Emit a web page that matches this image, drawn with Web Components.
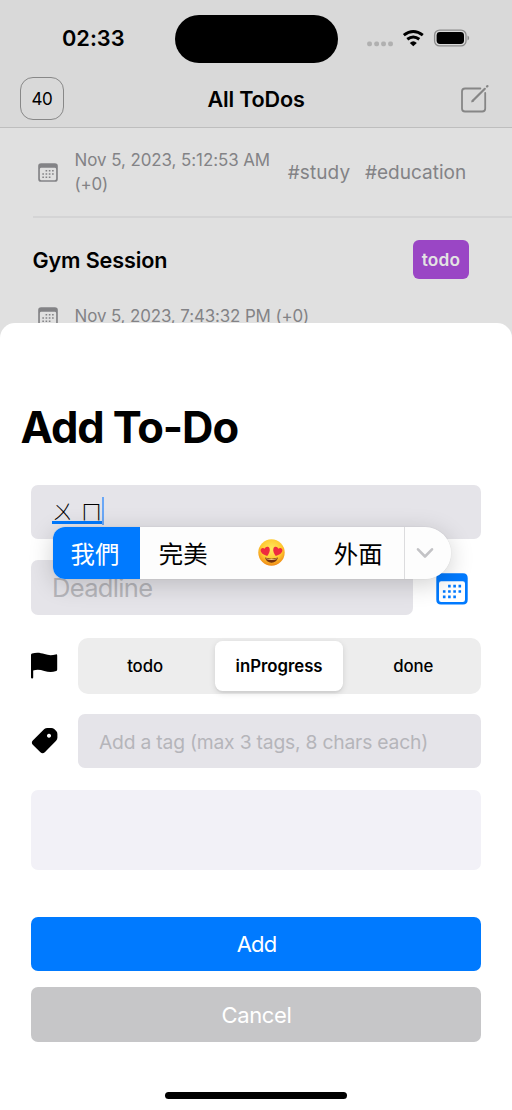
<!DOCTYPE html>
<html lang="en">
<head>
<meta charset="utf-8">
<title>Add To-Do</title>
<style>
html,body{margin:0;padding:0;background:#fff}
body{width:512px;height:1110px;overflow:hidden;font-family:Inter,"Noto Sans CJK TC",sans-serif;color:#000}
</style>
</head>
<body>
<todo-app></todo-app>
<script>
function define(name, html, setup) {
  const template = document.createElement('template');
  template.innerHTML = html.trim();
  customElements.define(name, class extends HTMLElement {
    constructor() {
      super();
      this.attachShadow({ mode: 'open' }).appendChild(template.content.cloneNode(true));
    }
    connectedCallback() { if (setup) setup.call(this, this.shadowRoot); }
  });
}

/* One line of text, tracked so that it fills the width given in "w". */
define('ui-text', `
<style>:host{display:block;flex:none;white-space:nowrap}span{display:inline-block;vertical-align:top}</style><span><slot></slot></span>`,
function (root) {
  const w = parseFloat(this.getAttribute('w'));
  if (!w) return;
  const span = root.querySelector('span');
  this.style.width = w + 'px';
  span.style.letterSpacing = '0';
  const natural = span.getBoundingClientRect().width;
  span.style.letterSpacing = ((w - natural) / this.textContent.length).toFixed(3) + 'px';
});

define('calendar-icon', `
<style>:host{display:block;flex:none;width:32px;height:32px}svg{display:block;width:100%;height:100%}</style>
<svg viewBox="0 0 32 32" preserveAspectRatio="none" fill="currentColor">
<path fill-rule="evenodd" d="M5 0.3H27Q31.7 0.3 31.7 5V26.8Q31.7 31.6 27 31.6H5Q0.3 31.6 0.3 26.8V5Q0.3 0.3 5 0.3ZM5.2 8.2Q3 8.2 3 10.4V26.7Q3 29 5.2 29H26.8Q29 29 29 26.7V10.4Q29 8.2 26.8 8.2Z"/>
<path d="M12.1 11.8h2.6v2.6h-2.6zM17.3 11.8h2.6v2.6h-2.6zM22.5 11.8h2.6v2.6h-2.6zM6.9 17.2h2.6v2.6H6.9zM12.1 17.2h2.6v2.6h-2.6zM17.3 17.2h2.6v2.6h-2.6zM22.5 17.2h2.6v2.6h-2.6zM6.9 22.6h2.6v2.6H6.9zM12.1 22.6h2.6v2.6h-2.6zM17.3 22.6h2.6v2.6h-2.6z"/>
</svg>`);

define('status-bar', `
<style>
:host{display:flex;height:76px;box-sizing:border-box;align-items:flex-start;background:#d9d9d9}
ui-text{margin:25px 0 0 62px;font-size:21.8px;line-height:26px;font-weight:600}
.island{width:163px;height:48px;margin:14.5px 0 0 50px;border-radius:24px;background:#000}
svg{display:block;margin:28px 0 0 28px}
</style>
<ui-text w="62.5">02:33</ui-text>
<div class="island"></div>
<svg width="104" height="20" viewBox="366 28 104 20">
<g fill="#b0b0b0"><rect x="367.2" y="41.5" width="4.7" height="4.7" rx="1.7"/><rect x="374.3" y="41.5" width="4.7" height="4.7" rx="1.7"/><rect x="381.2" y="41.5" width="4.7" height="4.7" rx="1.7"/><rect x="388.2" y="41.5" width="4.7" height="4.7" rx="1.7"/></g>
<g fill="none" stroke="#000" stroke-width="3"><path d="M403.8 35.1Q413.3 27.9 422.8 35.1"/><path d="M407.3 39.3Q413.3 34.7 419.3 39.3"/></g>
<path d="M409.8 42.9Q413.3 39.7 416.8 42.9L413.3 46.2Z"/>
<rect x="434.6" y="30.1" width="31.4" height="15.8" rx="5" fill="none" stroke="#8c8c8c" stroke-width="1.3"/>
<rect x="436.6" y="32.1" width="27.4" height="11.8" rx="3.4"/>
<path d="M467.5 35.6Q469.2 36.3 469.2 38T467.5 40.4Z" fill="#8c8c8c"/>
</svg>`);

define('nav-bar', `
<style>
:host{display:grid;grid-template-columns:1fr auto 1fr;align-items:center;height:51.8px;box-sizing:border-box;padding:0 22.5px 6.4px 20px;background:#d9d9d9;border-bottom:1px solid #bebebe}
.count{display:flex;align-items:center;justify-content:center;width:44px;height:42.6px;box-sizing:border-box;border:1.2px solid #888;border-radius:13px;font-size:17px;line-height:20px}
.count ui-text{margin-top:1px}
h1{margin:1px 0 0 2.6px;font-size:21.6px;line-height:26px;font-weight:600}
svg{display:block;justify-self:end}
</style>
<div class="count"><ui-text w="21">40</ui-text></div>
<h1><ui-text w="97">All ToDos</ui-text></h1>
<svg width="30" height="30" viewBox="460 84 30 30" fill="none" stroke="#868686" stroke-width="1.8" stroke-linecap="round">
<path d="M480.4 89.5H465Q462 89.5 462 92.5V109.5Q462 112.5 465 112.5H482.2Q485.2 112.5 485.2 109.5V94"/>
<path d="M472.5 102L484.8 89.8" stroke-width="2.2"/><path d="M471.2 103.4L474.2 102.2L472.3 100.6Z" fill="#868686" stroke="none"/><path d="M487 87.5L487.4 87.1" stroke-width="2.3"/>
</svg>`);

define('date-line', `
<style>
:host{display:flex;align-items:center;color:#838386;font-size:16.9px;line-height:23.8px}
calendar-icon{width:20px;height:19px;margin:0 16.6px 0 38px}
div{padding-top:1px}
</style>
<calendar-icon></calendar-icon><div><slot></slot></div>`);

define('todo-list', `
<style>
:host{display:block;height:262px;overflow:hidden;background:#e0e0e0}
.first{display:flex;align-items:center;height:88.7px;box-sizing:border-box;color:#838386;font-size:19px;line-height:24px}
.first date-line{width:287.7px}
.first>ui-text{margin-top:1.6px}
.sep{height:1.6px;margin-left:33px;background:#d4d4d5}
.head{display:flex;justify-content:space-between;align-items:center;padding:22.2px 43px 0 32.4px;font-size:21.6px;line-height:26px;font-weight:600}
.status{display:flex;align-items:center;justify-content:center;width:56px;height:39px;border-radius:6px;background:#9a46c5;color:#e3e3e3;font-size:17.3px}
.second{margin-top:24.5px}
.gap{width:14.8px}
</style>
<div class="first"><date-line><ui-text w="195.5">Nov 5, 2023, 5:12:53 AM</ui-text><ui-text w="33.5">(+0)</ui-text></date-line><ui-text w="62.5">#study</ui-text><span class="gap"></span><ui-text w="101.2">#education</ui-text></div>
<div class="sep"></div>
<div class="head"><ui-text w="135">Gym Session</ui-text><div class="status"><ui-text w="38.5">todo</ui-text></div></div>
<date-line class="second"><ui-text w="234.5">Nov 5, 2023, 7:43:32 PM (+0)</ui-text></date-line>`);

define('form-field', `
<style>
:host{display:flex;align-items:center;flex:1;height:54.6px;box-sizing:border-box;padding-left:21px;border-radius:7px;background:#e5e4e9;color:#b5b5ba}
</style><slot></slot>`);

define('status-picker', `
<style>
:host{display:grid;grid-template-columns:1fr 1fr 1fr;flex:1;height:55.6px;box-sizing:border-box;padding:2.5px 1px;border-radius:10px;background:#ededed;font-size:16.8px;line-height:22px;font-weight:500}
div{display:flex;align-items:center;justify-content:center}
div:first-of-type{padding-right:1.4px}
.on{margin:0 3.4px 0 2.6px;border-radius:7.5px;background:#fff;font-weight:600;box-shadow:0 2px 6px #0000001f,0 2px 1px #0000000a}
</style>
<div><ui-text w="36">todo</ui-text></div><div class="on"><ui-text w="87">inProgress</ui-text></div><div><ui-text w="40">done</ui-text></div>`);

define('action-button', `
<style>
:host{display:block}
button{display:flex;align-items:center;justify-content:center;width:100%;height:54.8px;border:0;padding:1px 0 0 1px;border-radius:7px;background:var(--fill);color:#fff;font:400 22px/28px Inter,sans-serif}
</style><button><slot></slot></button>`);

define('heart-eyes', `
<style>:host{display:block}svg{display:block}</style>
<svg width="27" height="27" viewBox="0 0 27 27">
<defs><radialGradient id="face" cx=".5" cy=".36" r=".66"><stop offset="0" stop-color="#ffe95e"/><stop offset=".6" stop-color="#ffc931"/><stop offset="1" stop-color="#ee8312"/></radialGradient></defs>
<circle cx="13.5" cy="13.5" r="13.2" fill="url(#face)"/>
<path d="M9.2 17C6 16.1 2.9 14.3 2.6 11.6C2.4 9.2 5 8.1 6.7 9.8C7.4 7.4 10.5 7 11.5 9.3C12.5 11.8 10.9 14.8 9.2 17Z" fill="#ef2b3f"/>
<path d="M17.8 17C21 16.1 24.1 14.3 24.4 11.6C24.6 9.2 22 8.1 20.3 9.8C19.6 7.4 16.5 7 15.5 9.3C14.5 11.8 16.1 14.8 17.8 17Z" fill="#ef2b3f"/>
<path d="M7 18.6Q13.5 20.8 20 18.6Q18.7 23.7 13.5 23.7T7 18.6Z" fill="#75310d"/><path d="M8 19.2Q13.5 21 19 19.2L18.5 20.3Q13.5 21.8 8.5 20.3Z" fill="#eec27f"/>
</svg>`);

/* Input method candidates, floating below the text being composed. */
define('candidate-bar', `
<style>
:host{position:absolute;left:22px;top:42.2px;z-index:2;display:flex;width:398px;height:52.3px;border-radius:12px 26px 26px 12px;overflow:hidden;background:#fdfdfd;color:#000;font:400 24.4px/30px "Noto Sans CJK TC",sans-serif}
div{display:flex;align-items:center;justify-content:center;width:87.5px;box-sizing:border-box}
.on{width:87px;padding-right:3px;background:#007aff;color:#fff}
.on+div,.on+div+div+div{padding-right:1.2px}
.more{width:auto;flex:1;border-left:1.2px solid #dcdcde;padding-right:6px;margin-left:1.5px}
</style>
<div class="on">我們</div><div>完美</div><div><heart-eyes></heart-eyes></div><div>外面</div>
<div class="more"><svg width="18" height="12" viewBox="0 0 18 12" fill="none" stroke="#c3c3c6" stroke-width="2.6" stroke-linecap="round" stroke-linejoin="round"><path d="M2 2.3L9 9.5L16 2.3"/></svg></div>`);

define('title-field', `
<style>
:host{display:flex;position:relative}
.composing{display:flex;align-items:center;height:26.5px;border-bottom:3px solid #007aff;width:50.5px;box-sizing:border-box;font:300 21px/24px "Noto Sans CJK JP",sans-serif;color:#000;margin-top:-2px}
.a,.b{display:block;width:21px;text-align:center;margin-top:2px}.b{margin-left:8px}
.caret{width:2px;height:28px;margin:0 0 1px -1px;background:#6aa7f6}
.shadow{position:absolute;left:22px;top:42.2px;width:398px;height:52.3px;border-radius:12px 26px 26px 12px;z-index:1;box-shadow:0 0 1px #0003,0 5px 24px #00000030}
</style>
<form-field><div class="composing"><span class="a">ㄨ</span><span class="b">ㄇ</span></div><i class="caret"></i></form-field>
<i class="shadow"></i><candidate-bar></candidate-bar>`);

define('add-sheet', `
<style>
:host{display:flex;flex-direction:column;box-sizing:border-box;height:787px;padding:79px 31px 0;border-radius:15px 15px 0 0;background:#fff}
h2{margin:0 0 31.6px -10.5px;font-size:43.5px;line-height:51px;font-weight:700}
.row{display:flex;align-items:center}
.due{margin-top:20.8px}
.due calendar-icon{margin:3px 13px 0 23px;color:#007aff}
.due ui-text{font-size:25.5px;margin-top:1px}
.state{margin-top:23.8px}
.tag{margin-top:19.8px}
.row>svg{flex:none;display:block;width:47px;height:30px}
.tag ui-text{font-size:19.3px;line-height:26px;margin-top:1.4px}
.notes{flex:none;height:80px;margin:21.4px 0 46.8px;border-radius:7px;background:#f2f1f7}
.cancel{margin-top:15.6px}
.home{width:182px;height:6.6px;border-radius:4px;background:#000;margin:50.5px auto 0}
</style>
<h2><ui-text w="217.5">Add To-Do</ui-text></h2>
<title-field></title-field>
<div class="row due"><form-field><ui-text w="100.5">Deadline</ui-text></form-field><calendar-icon></calendar-icon></div>
<div class="row state"><svg viewBox="0 0 47 30"><path d="M0 4.1Q0 3 1 2.6C5.5 1 9.5 1.7 13.5 3.1C17.5 4.5 21 4.5 24.7 3.4Q26.2 3 26.2 4.4V18.6Q26.2 19.8 25.2 20.1C21 21.5 17.5 21.3 13.3 20C9.5 18.7 6 18.4 2.2 19.4V26.4Q2.2 27.5 1.1 27.5Q0 27.5 0 26.4Z"/></svg><status-picker></status-picker></div>
<div class="row tag"><svg viewBox="0 0 47 30"><path fill-rule="evenodd" d="M13.3 3.1Q14.6 1.9 16.4 1.9H20.3Q22 1.9 23.2 3.1L25.2 5.1Q26.4 6.3 26.4 8V11.6Q26.4 13.5 25.1 14.8L13.8 26.3Q11.6 28.3 9.4 26.3L1.8 18.8Q-.1 16.7 1.8 14.6ZM18 7.7a2 2 0 1 0 .01 0Z"/></svg><form-field><ui-text w="329">Add a tag (max 3 tags, 8 chars each)</ui-text></form-field></div>
<div class="notes"></div>
<action-button style="--fill:#007aff"><ui-text w="39.5">Add</ui-text></action-button>
<action-button class="cancel" style="--fill:#c6c6c8"><ui-text w="70">Cancel</ui-text></action-button>
<div class="home"></div>`);

define('todo-app', `
<style>
:host{display:block;position:relative;width:512px;height:1110px;overflow:hidden;background:#e0e0e0}
add-sheet{position:absolute;left:0;right:0;bottom:0}
</style>
<status-bar></status-bar><nav-bar></nav-bar><todo-list></todo-list><add-sheet></add-sheet>`);
</script>
</body>
</html>
